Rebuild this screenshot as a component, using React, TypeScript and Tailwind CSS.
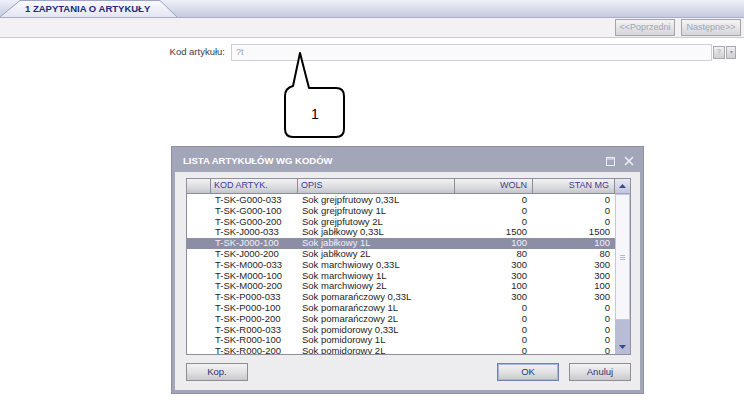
const rows = [
  ['T-SK-G000-033', 'Sok grejpfrutowy 0,33L', '0', '0'],
  ['T-SK-G000-100', 'Sok grejpfrutowy 1L', '0', '0'],
  ['T-SK-G000-200', 'Sok grejpfutowy 2L', '0', '0'],
  ['T-SK-J000-033', 'Sok jabłkowy 0,33L', '1500', '1500'],
  ['T-SK-J000-100', 'Sok jabłkowy 1L', '100', '100'],
  ['T-SK-J000-200', 'Sok jabłkowy 2L', '80', '80'],
  ['T-SK-M000-033', 'Sok marchwiowy 0,33L', '300', '300'],
  ['T-SK-M000-100', 'Sok marchwiowy 1L', '300', '300'],
  ['T-SK-M000-200', 'Sok marchwiowy 2L', '100', '100'],
  ['T-SK-P000-033', 'Sok pomarańczowy 0,33L', '300', '300'],
  ['T-SK-P000-100', 'Sok pomarańczowy 1L', '0', '0'],
  ['T-SK-P000-200', 'Sok pomarańczowy 2L', '0', '0'],
  ['T-SK-R000-033', 'Sok pomidorowy 0,33L', '0', '0'],
  ['T-SK-R000-100', 'Sok pomidorowy 1L', '0', '0'],
  ['T-SK-R000-200', 'Sok pomidorowy 2L', '0', '0'],
]

const SELECTED = 4

function ToolButton({ children }: { children: React.ReactNode }) {
  return (
    <div className="flex h-[17px] w-[60px] items-center justify-center border border-[#a4a4a8] bg-gradient-to-b from-[#f4f4f4] to-[#d6d6da] text-[9px] text-[#a4a6b4]">
      {children}
    </div>
  )
}

function DlgButton({ children, focused }: { children: React.ReactNode; focused?: boolean }) {
  return (
    <div
      className={
        'flex h-[18px] w-[62px] items-center justify-center border bg-gradient-to-b from-[#f2f2f2] via-[#e2e2e4] to-[#c9c9cc] text-[9.5px] text-[#2e3170] ' +
        (focused ? 'border-[#6f83b8] ring-1 ring-inset ring-[#a9b6d8]' : 'border-[#8e8e92]')
      }
    >
      {children}
    </div>
  )
}

function HeadCell({ children, right }: { children?: React.ReactNode; right?: boolean }) {
  return (
    <div
      className={
        'flex h-full items-center border-r border-[#8a8c98] bg-gradient-to-b from-[#f2f2f4] via-[#e0e0e4] to-[#c4c6cc] px-[3px] text-[9px] text-[#3b3b96] ' +
        (right ? 'justify-end pr-[5px]' : '')
      }
    >
      {children}
    </div>
  )
}

export default function App() {
  return (
    <div className="relative h-[400px] w-[744px] overflow-hidden bg-white font-['Liberation_Sans',sans-serif]">
      {/* tab strip */}
      <div className="flex h-[18px] items-end border-b border-[#a9adc6] bg-gradient-to-b from-[#eef0f8] to-[#c6cae0]">
        <div className="relative h-[17px] w-[178px]">
          <svg className="absolute inset-0" width="178" height="17" viewBox="0 0 178 17">
            <defs>
              <linearGradient id="tabg" x1="0" y1="0" x2="0" y2="1">
                <stop offset="0" stopColor="#fbfbfe" />
                <stop offset="1" stopColor="#e3e5f1" />
              </linearGradient>
            </defs>
            <path d="M0 17 L20 0.5 L160 0.5 L177 17" fill="url(#tabg)" stroke="#9ca2c2" strokeWidth="1" />
          </svg>
          <span className="relative block pl-[25px] pt-[3px] text-[9.5px] font-bold leading-[11px] text-[#1f2c82]">
            1 ZAPYTANIA O ARTYKUŁY
          </span>
        </div>
      </div>

      {/* toolbar */}
      <div className="flex h-[20px] items-center justify-end gap-[6px] border-b border-[#c9c9cf] bg-[#f3f1f3] pr-[3px]">
        <ToolButton>&lt;&lt;Poprzedni</ToolButton>
        <ToolButton>Następne&gt;&gt;</ToolButton>
      </div>

      {/* form row */}
      <div className="mt-[6px] flex h-[17px] items-center">
        <div className="w-[228px] pr-[3px] text-right text-[9.5px] text-[#3a3a4a]">Kod artykułu:</div>
        <div className="ml-[3px] flex h-[17px] w-[481px] items-center border border-[#cfcfd6] bg-[#fbfafb] px-[4px] text-[9px] text-[#a0a0a8]">
          ?t
        </div>
        <div className="ml-[1px] flex h-[13px] w-[12px] items-center justify-center border border-[#a8a8ae] bg-gradient-to-b from-[#f0f0f0] to-[#cfcfd4] text-[7px] text-[#9a9aa4]">
          ?
        </div>
        <div className="ml-[1px] flex h-[13px] w-[10px] items-center justify-center border border-[#a8a8ae] bg-gradient-to-b from-[#f0f0f0] to-[#cfcfd4] text-[6px] text-[#9a9aa4]">
          ▾
        </div>
      </div>

      {/* callout */}
      <svg className="absolute left-[280px] top-[48px]" width="70" height="95" viewBox="280 48 70 95">
        <path
          d="M300 53 L293 86 Q285 88 285 96 L285 129 Q285 137 293 137 L336 137 Q344 137 344 129 L344 96 Q344 88 336 88 L309 88 Z"
          fill="white"
          stroke="black"
          strokeWidth="2"
          strokeLinejoin="round"
        />
        <text x="315" y="119" fontSize="14" textAnchor="middle" fontFamily="Liberation Sans, sans-serif" fill="black">
          1
        </text>
      </svg>

      {/* dialog */}
      <div className="absolute left-[172px] top-[147px] flex h-[246px] w-[471px] flex-col border-[3px] border-[#a3a5b8] bg-[#ededf0] shadow-[0_0_0_1px_#8e91a6]">
        <div className="flex h-[22px] items-center justify-between bg-[#a3a5b8] pl-[8px] pr-[6px]">
          <span className="text-[9.5px] font-bold text-white">LISTA ARTYKUŁÓW WG KODÓW</span>
          <div className="flex items-center gap-[9px]">
            <svg width="9" height="9" viewBox="0 0 9 9">
              <rect x="0.5" y="0.5" width="8" height="8" fill="none" stroke="#eceef6" strokeWidth="1" />
              <line x1="0.5" y1="2" x2="8.5" y2="2" stroke="#eceef6" strokeWidth="1" />
            </svg>
            <svg width="10" height="10" viewBox="0 0 10 10">
              <path d="M1 1 L9 9 M9 1 L1 9" stroke="#eceef6" strokeWidth="1.6" />
            </svg>
          </div>
        </div>

        <div className="flex flex-1 flex-col px-[11px] pt-[6px]">
          {/* grid */}
          <div className="flex h-[177px] w-[445px] border border-[#8e90a2] bg-white">
            <div className="flex w-[428px] flex-col overflow-hidden">
              <div className="grid h-[15px] shrink-0 grid-cols-[24px_87px_157px_78px_82px] border-b border-[#8a8c98]">
                <HeadCell />
                <HeadCell>KOD ARTYK.</HeadCell>
                <HeadCell>OPIS</HeadCell>
                <HeadCell right>WOLN</HeadCell>
                <HeadCell right>STAN MG</HeadCell>
              </div>
              <div className="flex flex-col overflow-hidden pt-px">
                {rows.map((r, i) => (
                  <div
                    key={r[0]}
                    className={
                      'grid h-[10.8px] shrink-0 grid-cols-[24px_87px_157px_78px_82px] text-[9.5px] leading-[10.8px] ' +
                      (i === SELECTED ? 'bg-[#8c8ea6] text-[#eef0f8]' : 'text-[#1e1e24]')
                    }
                  >
                    <div />
                    <div className="pl-[4px]">{r[0]}</div>
                    <div className="pl-[4px]">{r[1]}</div>
                    <div className="pr-[6px] text-right">{r[2]}</div>
                    <div className="pr-[5px] text-right">{r[3]}</div>
                  </div>
                ))}
              </div>
            </div>
            {/* scrollbar */}
            <div className="flex w-[15px] flex-col bg-[#b8bcd5]">
              <div className="flex h-[15px] items-center justify-center border-b border-[#a0a4bc] bg-gradient-to-b from-[#e6e8f2] to-[#c2c6dc]">
                <svg width="7" height="4" viewBox="0 0 7 4">
                  <path d="M0 4 L3.5 0 L7 4 Z" fill="#3c4a8c" />
                </svg>
              </div>
              <div className="flex h-[126px] items-center justify-center border border-[#c4c8dc] bg-[#f7f7fb]">
                <div className="flex flex-col gap-[1px]">
                  <div className="h-px w-[5px] bg-[#b4b8cc]" />
                  <div className="h-px w-[5px] bg-[#b4b8cc]" />
                  <div className="h-px w-[5px] bg-[#b4b8cc]" />
                </div>
              </div>
              <div className="flex-1" />
              <div className="flex h-[15px] items-center justify-center">
                <svg width="7" height="4" viewBox="0 0 7 4">
                  <path d="M0 0 L3.5 4 L7 0 Z" fill="#3c4a8c" />
                </svg>
              </div>
            </div>
          </div>

          {/* buttons */}
          <div className="mt-[8px] flex w-[445px] items-center">
            <DlgButton>Kop.</DlgButton>
            <div className="flex-1" />
            <DlgButton focused>OK</DlgButton>
            <div className="w-[10px]" />
            <DlgButton>Anuluj</DlgButton>
          </div>
        </div>
      </div>
    </div>
  )
}
